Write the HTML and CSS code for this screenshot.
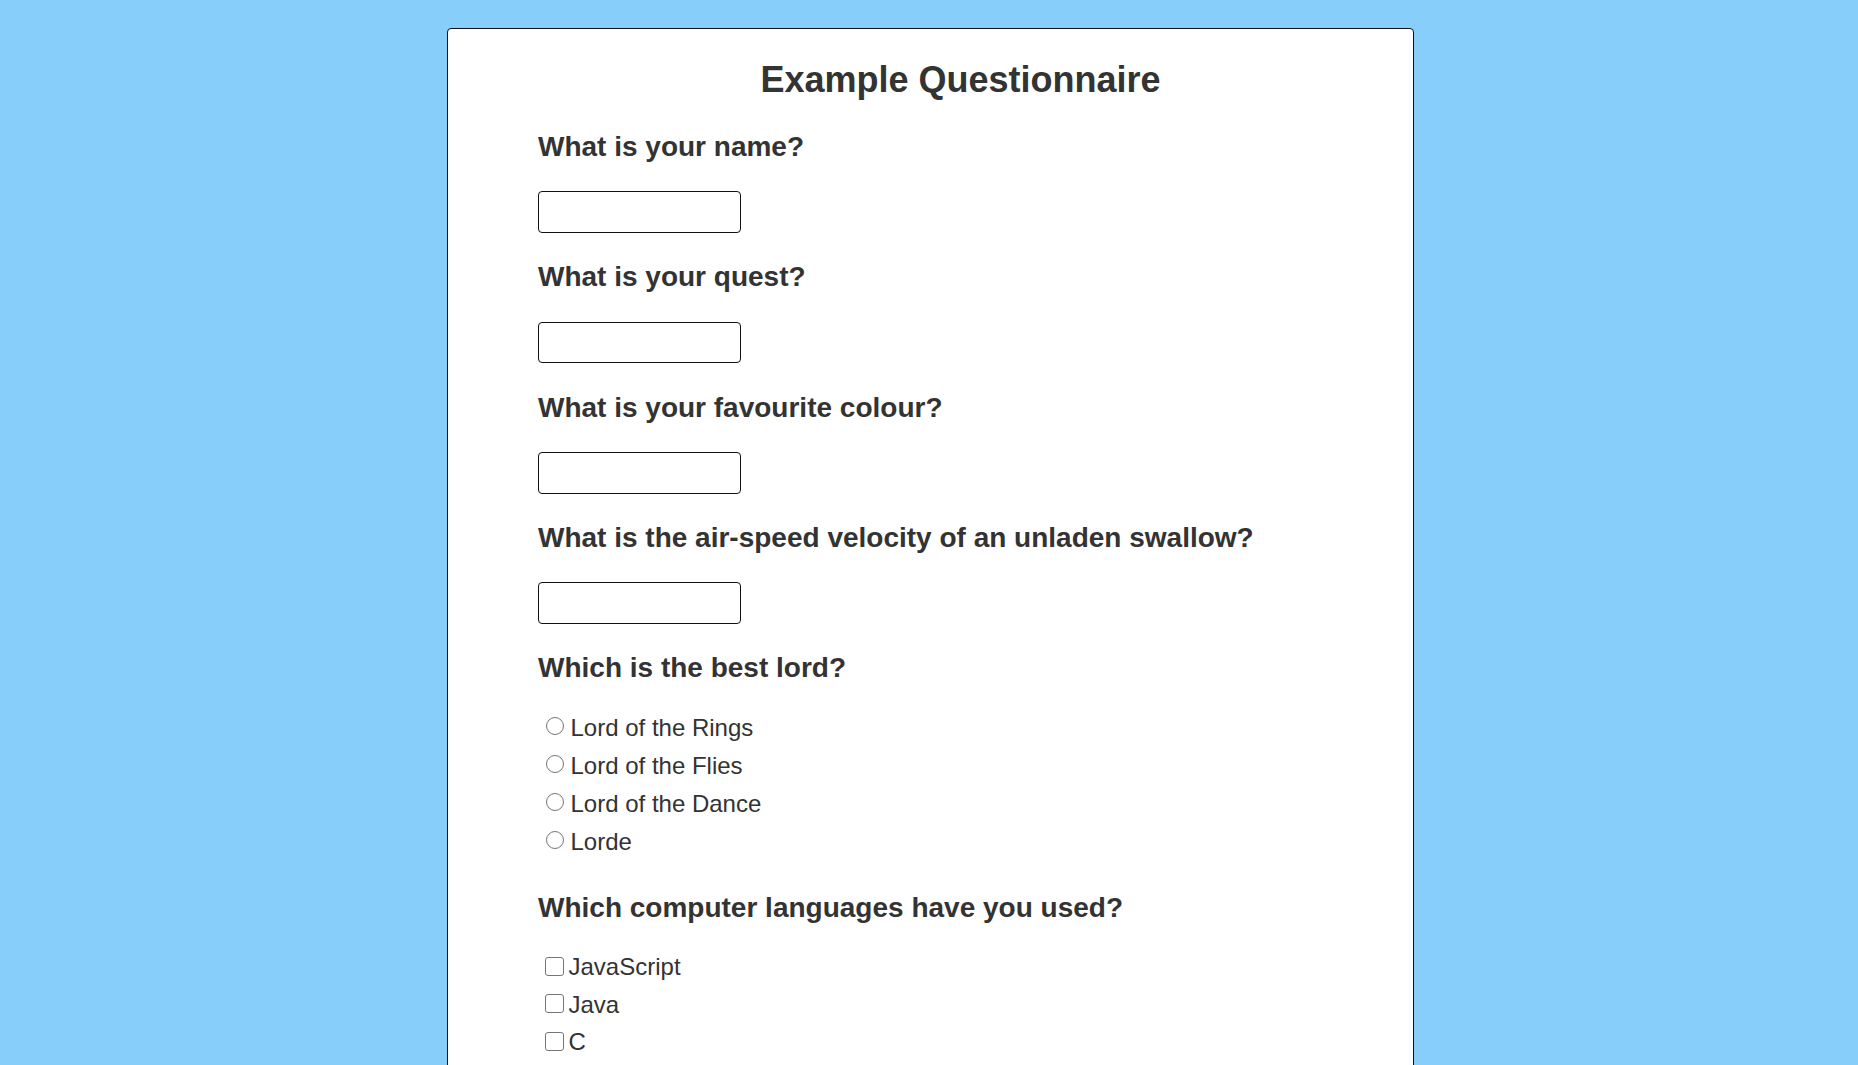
FILE: index.html
```html
<!DOCTYPE html>
<html lang="en">
<head>
<meta charset="utf-8">
<title>Example Questionnaire</title>
<link rel="stylesheet" href="styles.css">
</head>
<body>
<main class="card">
  <form class="form">
    <h1 class="title">Example Questionnaire</h1>

    <h3 class="question">What is your name?</h3>
    <div class="field"><input class="text-input" type="text"></div>

    <h3 class="question">What is your quest?</h3>
    <div class="field"><input class="text-input" type="text"></div>

    <h3 class="question">What is your favourite colour?</h3>
    <div class="field"><input class="text-input" type="text"></div>

    <h3 class="question">What is the air-speed velocity of an unladen swallow?</h3>
    <div class="field"><input class="text-input" type="text"></div>

    <h3 class="question">Which is the best lord?</h3>
    <div class="options radios">
      <label class="option"><input class="radio" type="radio" name="lord">Lord of the Rings</label>
      <label class="option"><input class="radio" type="radio" name="lord">Lord of the Flies</label>
      <label class="option"><input class="radio" type="radio" name="lord">Lord of the Dance</label>
      <label class="option"><input class="radio" type="radio" name="lord">Lorde</label>
    </div>

    <h3 class="question">Which computer languages have you used?</h3>
    <div class="options checks">
      <label class="option"><input class="check" type="checkbox">JavaScript</label>
      <label class="option"><input class="check" type="checkbox">Java</label>
      <label class="option"><input class="check" type="checkbox">C</label>
    </div>
  </form>
</main>
</body>
</html>
```
FILE: styles.css
```css
html, body {
  margin: 0;
  padding: 0;
}

body {
  background: #87cefa;
  font-family: "Liberation Sans", Arial, sans-serif;
  color: #333;
}

.card {
  width: 967px;
  margin: 28px 0 0 calc(50% - 482px);
  background: #fff;
  border: 1px solid #111;
  border-radius: 4px;
  padding: 0 30px 120px;
  box-sizing: border-box;
}

.form {
  padding-left: 60px;
  display: flow-root;
}

.title {
  font-size: 36px;
  font-weight: bold;
  text-align: center;
  margin: 30px 0 30px;
  line-height: normal;
}

.question {
  font-size: 28px;
  font-weight: bold;
  margin: 28.3px 0;
  line-height: normal;
}

.field {
  line-height: 0;
}

.text-input {
  width: 203px;
  height: 41.7px;
  box-sizing: border-box;
  border: 1px solid #111;
  border-radius: 4px;
  background: #fff;
  margin: 0;
  padding: 0 8px;
  font: inherit;
  font-size: 20px;
}

.options {
  margin-bottom: 34.5px;
}

.radios {
  padding-top: 1px;
}

.option {
  display: flex;
  align-items: center;
  font-size: 24px;
  line-height: 30px;
  height: 30px;
  margin-bottom: 8px;
}

.checks .option {
  margin-bottom: 7.6px;
}

.radio {
  -webkit-appearance: none;
  appearance: none;
  width: 18px;
  height: 18px;
  box-sizing: border-box;
  border: 1.5px solid #767676;
  border-radius: 50%;
  background: #fff;
  margin: 0 7px 4px 7.5px;
  flex: none;
}

.check {
  -webkit-appearance: none;
  appearance: none;
  width: 19px;
  height: 19px;
  box-sizing: border-box;
  border: 1.5px solid #767676;
  border-radius: 3px;
  background: #fff;
  margin: 0 5px 2px 6.5px;
  flex: none;
}
```
